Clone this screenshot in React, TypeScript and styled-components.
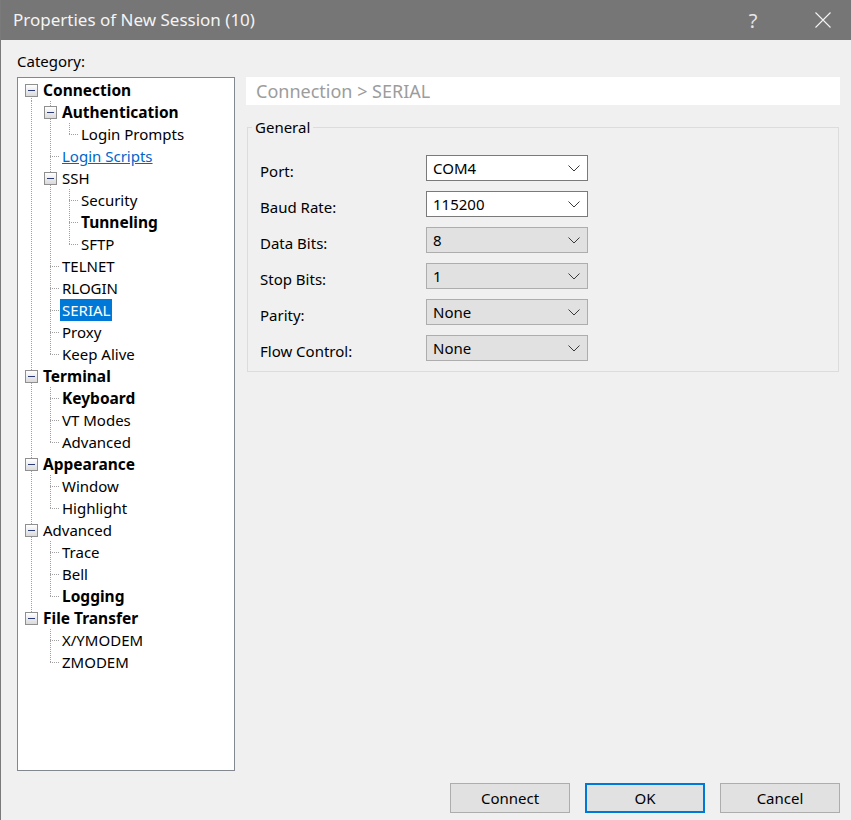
import React from "react";
import styled, { createGlobalStyle } from "styled-components";

const GlobalStyle = createGlobalStyle`
  *, *::before, *::after { box-sizing: border-box; }
  html, body { margin: 0; padding: 0; background: #f0f0f0; }
  body {
    font-family: "Noto Sans", "Open Sans", "Liberation Sans", sans-serif;
    font-size: 15px;
    color: #000;
  }
`;

const Window = styled.div`
  width: 851px;
  height: 820px;
  display: flex;
  flex-direction: column;
  background: #f0f0f0;
  border-left: 1px solid #7a7a7a;
  overflow: hidden;
`;

const TitleBar = styled.div`
  height: 40px;
  flex: none;
  display: flex;
  align-items: center;
  background: #767676;
  color: #f4f4f4;
  padding-left: 12px;
`;

const Title = styled.div`
  flex: 1;
  font-size: 17px;
  line-height: 22px;
`;

const CaptionButton = styled.div<{ $gapAfter: number }>`
  width: 46px;
  height: 40px;
  margin-right: ${({ $gapAfter }) => $gapAfter}px;
  display: flex;
  align-items: center;
  justify-content: center;
  font-size: 20px;
  color: #e6e6e6;
`;

const Body = styled.div`
  flex: 1;
  display: flex;
  flex-direction: column;
  padding: 11px 11px 0 16px;
`;

const CategoryLabel = styled.div`
  height: 20px;
  line-height: 20px;
  margin-bottom: 6px;
`;

const Main = styled.div`
  height: 694px;
  display: flex;
  gap: 11px;
`;

const TreeBox = styled.div`
  width: 218px;
  flex: none;
  background: #fff;
  border: 1px solid #828790;
  padding: 1px 4px;
`;

const Row = styled.div`
  height: 22px;
  display: flex;
  align-items: stretch;
`;

const dotV = "repeating-linear-gradient(to bottom, #a0a0a0 0 1px, transparent 1px 2px)";
const dotH = "repeating-linear-gradient(to right, #a0a0a0 0 1px, transparent 1px 2px)";

function guideLayers(top: boolean, bottom: boolean, h: boolean) {
  const imgs: string[] = [];
  const pos: string[] = [];
  const size: string[] = [];
  if (top || bottom) {
    imgs.push(dotV);
    pos.push(top ? "9px 0" : "9px 11px");
    size.push(top && bottom ? "1px 22px" : "1px 11px");
  }
  if (h) {
    imgs.push(dotH);
    pos.push("9px 11px");
    size.push("9px 1px");
  }
  if (!imgs.length) return "";
  return `
    background-image: ${imgs.join(", ")};
    background-position: ${pos.join(", ")};
    background-size: ${size.join(", ")};
    background-repeat: no-repeat;
  `;
}

const Guide = styled.span<{ $top?: boolean; $bottom?: boolean; $h?: boolean }>`
  width: 19px;
  flex: none;
  display: flex;
  align-items: center;
  ${({ $top, $bottom, $h }) => guideLayers(!!$top, !!$bottom, !!$h)}
`;

const Expander = styled.span`
  width: 13px;
  height: 13px;
  margin-left: 3px;
  border: 1px solid #8f8f8f;
  background: linear-gradient(#ffffff, #dadada);
  display: flex;
  align-items: center;
  justify-content: center;
`;

const Dash = styled.span`
  width: 7px;
  height: 1px;
  background: #2c3a78;
`;

const Label = styled.span<{ $bold?: boolean; $link?: boolean; $selected?: boolean }>`
  display: flex;
  align-items: center;
  padding: 0 2px;
  white-space: nowrap;
  line-height: 22px;
  font-size: ${({ $bold }) => ($bold ? "15.5px" : "15px")};
  font-weight: ${({ $bold }) => ($bold ? 700 : 400)};
  color: ${({ $link, $selected }) => ($selected ? "#fff" : $link ? "#0066cc" : "#000")};
  text-decoration: ${({ $link }) => ($link ? "underline" : "none")};
  background: ${({ $selected }) => ($selected ? "#0078d7" : "transparent")};
`;

const Panel = styled.div`
  flex: 1;
  display: flex;
  flex-direction: column;
`;

const PanelHeader = styled.div`
  height: 28px;
  line-height: 28px;
  background: #fff;
  padding-left: 10px;
  font-size: 18px;
  color: #9c9c9c;
`;

const GroupBox = styled.fieldset`
  margin: 12px 1px 0 1px;
  border: 1px solid #dcdcdc;
  padding: 18px 12px 10px 12px;
  min-width: 0;
`;

const Legend = styled.legend`
  margin-left: -8px;
  padding: 0 3px;
  line-height: 20px;
`;

const Form = styled.div`
  display: grid;
  grid-template-columns: 166px 162px;
  row-gap: 10px;
  align-items: start;
`;

const FieldLabel = styled.div`
  height: 26px;
  line-height: 32px;
`;

const Combo = styled.div<{ $editable?: boolean }>`
  height: 26px;
  display: flex;
  align-items: center;
  justify-content: space-between;
  padding: 0 7px 0 6px;
  border: 1px solid ${({ $editable }) => ($editable ? "#7a7a7a" : "#adadad")};
  background: ${({ $editable }) => ($editable ? "#fff" : "#e1e1e1")};
`;

const Footer = styled.div`
  margin-top: 12px;
  display: flex;
  justify-content: flex-end;
  gap: 15px;
`;

const Button = styled.div<{ $default?: boolean }>`
  width: 120px;
  height: 30px;
  display: flex;
  align-items: center;
  justify-content: center;
  background: #e1e1e1;
  border: ${({ $default }) => ($default ? "2px solid #0078d7" : "1px solid #adadad")};
`;

type Node = {
  label: string;
  bold?: boolean;
  link?: boolean;
  selected?: boolean;
  children?: Node[];
};

const tree: Node[] = [
  {
    label: "Connection",
    bold: true,
    children: [
      { label: "Authentication", bold: true, children: [{ label: "Login Prompts" }] },
      { label: "Login Scripts", link: true },
      {
        label: "SSH",
        children: [{ label: "Security" }, { label: "Tunneling", bold: true }, { label: "SFTP" }],
      },
      { label: "TELNET" },
      { label: "RLOGIN" },
      { label: "SERIAL", selected: true },
      { label: "Proxy" },
      { label: "Keep Alive" },
    ],
  },
  {
    label: "Terminal",
    bold: true,
    children: [{ label: "Keyboard", bold: true }, { label: "VT Modes" }, { label: "Advanced" }],
  },
  { label: "Appearance", bold: true, children: [{ label: "Window" }, { label: "Highlight" }] },
  {
    label: "Advanced",
    children: [{ label: "Trace" }, { label: "Bell" }, { label: "Logging", bold: true }],
  },
  { label: "File Transfer", bold: true, children: [{ label: "X/YMODEM" }, { label: "ZMODEM" }] },
];

type FlatRow = { node: Node; continues: boolean[]; hasPrev: boolean; hasNext: boolean };

function flatten(nodes: Node[], continues: boolean[], out: FlatRow[]) {
  nodes.forEach((node, i) => {
    const hasNext = i < nodes.length - 1;
    out.push({ node, continues, hasPrev: i > 0 || continues.length > 0, hasNext });
    if (node.children) flatten(node.children, [...continues, hasNext], out);
  });
  return out;
}

const rows = flatten(tree, [], []);

const fields = [
  { label: "Port:", value: "COM4", editable: true },
  { label: "Baud Rate:", value: "115200", editable: true },
  { label: "Data Bits:", value: "8" },
  { label: "Stop Bits:", value: "1" },
  { label: "Parity:", value: "None" },
  { label: "Flow Control:", value: "None" },
];

const Chevron = () => (
  <svg width="12" height="7" viewBox="0 0 12 7">
    <polyline points="0.5,0.5 6,6 11.5,0.5" fill="none" stroke="#3a3a3a" strokeWidth="1" />
  </svg>
);

const CloseIcon = () => (
  <svg width="16" height="16" viewBox="0 0 16 16">
    <path d="M0.5 0.5 L15.5 15.5 M15.5 0.5 L0.5 15.5" stroke="#f4f4f4" strokeWidth="1.1" />
  </svg>
);

export default function App() {
  return (
    <>
      <GlobalStyle />
      <Window>
        <TitleBar>
          <Title>Properties of New Session (10)</Title>
          <CaptionButton $gapAfter={24}>?</CaptionButton>
          <CaptionButton $gapAfter={5}>
            <CloseIcon />
          </CaptionButton>
        </TitleBar>
        <Body>
          <CategoryLabel>Category:</CategoryLabel>
          <Main>
            <TreeBox>
              {rows.map(({ node, continues, hasPrev, hasNext }, i) => (
                <Row key={i}>
                  {continues.map((c, j) => (
                    <Guide key={j} $top={c} $bottom={c} />
                  ))}
                  <Guide $top={hasPrev} $bottom={hasNext} $h={!node.children}>
                    {node.children && (
                      <Expander>
                        <Dash />
                      </Expander>
                    )}
                  </Guide>
                  <Label $bold={node.bold} $link={node.link} $selected={node.selected}>
                    {node.label}
                  </Label>
                </Row>
              ))}
            </TreeBox>
            <Panel>
              <PanelHeader>Connection &gt; SERIAL</PanelHeader>
              <GroupBox>
                <Legend>General</Legend>
                <Form>
                  {fields.map((f) => (
                    <React.Fragment key={f.label}>
                      <FieldLabel>{f.label}</FieldLabel>
                      <Combo $editable={f.editable}>
                        <span>{f.value}</span>
                        <Chevron />
                      </Combo>
                    </React.Fragment>
                  ))}
                </Form>
              </GroupBox>
            </Panel>
          </Main>
          <Footer>
            <Button>Connect</Button>
            <Button $default>OK</Button>
            <Button>Cancel</Button>
          </Footer>
        </Body>
      </Window>
    </>
  );
}
